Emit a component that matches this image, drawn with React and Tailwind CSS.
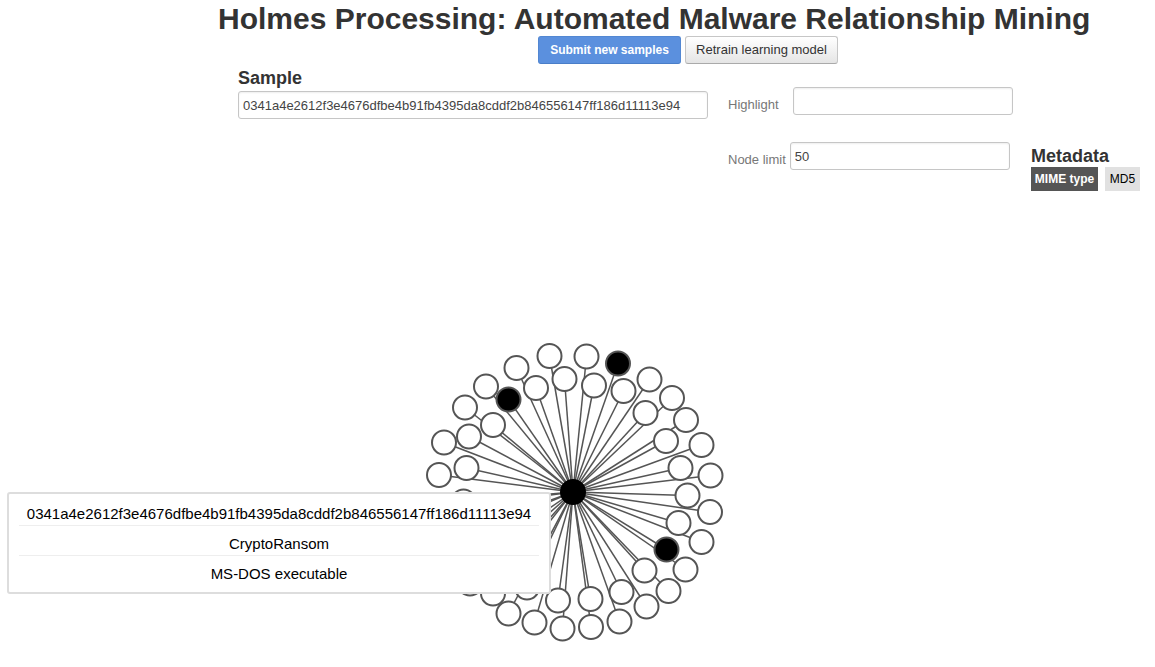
import React, { useState } from "react";

const HASH = "0341a4e2612f3e4676dfbe4b91fb4395da8cddf2b846556147ff186d11113e94";

const CENTER = [573, 492];

// [x, y, highlighted]
const NODES = [
  [549.5, 356], [516.5, 368], [486, 386.5], [508.5, 399.5, true], [536, 388],
  [564.5, 379], [465, 407.5], [493, 425], [444, 442.5], [469, 436.5],
  [439, 475], [466.5, 468], [463.5, 501.5], [586.5, 356.5], [618, 363.5, true],
  [594, 385.5], [623.5, 391], [649.5, 379.5], [672, 398], [645.5, 413],
  [686, 420], [666, 441], [701.5, 445], [680.5, 468], [710.5, 475.5],
  [687.5, 495.5], [710, 512], [678.5, 523], [701.5, 542], [666.5, 549.5, true],
  [685.5, 569.5], [644.5, 570.5], [668.5, 591], [621.5, 592], [646.5, 606.5],
  [619.5, 621.5], [590.5, 599], [591, 627], [558, 600.5], [562.5, 628.5],
  [534.5, 622.5], [508.5, 613.5], [493, 593.5], [527, 587.5], [470, 583.5],
  [440, 510], [446, 545], [466, 531], [480, 556], [501, 573],
];

const INPUT =
  "h-7 shrink-0 rounded-[3px] border border-[#c6c6c6] bg-white px-1 text-[13px] text-[#444] shadow-[inset_0_1px_2px_#eee] outline-none";

function Graph() {
  return (
    <svg
      className="block h-[300px] w-[300px] overflow-visible"
      viewBox="423 342 300 300"
      role="img"
      aria-label="Sample relationships"
    >
      <g stroke="#555" strokeWidth="1.5">
        {NODES.map(([x, y], i) => (
          <line key={i} x1={CENTER[0]} y1={CENTER[1]} x2={x} y2={y} />
        ))}
      </g>
      <g stroke="#555" strokeWidth="2">
        {NODES.map(([x, y, on], i) => (
          <circle key={i} cx={x} cy={y} r="12" fill={on ? "#000" : "#fff"} />
        ))}
      </g>
      <circle cx={CENTER[0]} cy={CENTER[1]} r="13" fill="#000" />
    </svg>
  );
}

export default function App() {
  const [sample, setSample] = useState(HASH);
  const [highlight, setHighlight] = useState("");
  const [limit, setLimit] = useState("50");

  return (
    <div className="overflow-x-hidden bg-white font-['Liberation_Sans',Arial,sans-serif] text-[13px] text-[#333]">
      <header className="pl-[218px]">
        <h1 className="whitespace-nowrap pt-[2px] text-[30px] font-bold leading-[34px]">
          Holmes Processing: Automated Malware Relationship Mining
        </h1>
        <div className="flex gap-1 pl-80">
          <button
            type="button"
            className="h-7 w-[143px] whitespace-nowrap rounded-[3px] border border-[#5287d2] border-b-[#4a7ec8] bg-[#5b90de] text-[12px] font-bold text-white"
          >
            Submit new samples
          </button>
          <button
            type="button"
            className="h-7 w-[153px] whitespace-nowrap rounded-[3px] border border-[#c6c6c6] border-b-[#aaa] bg-linear-to-b from-white to-[#e5e5e5] text-[13px] text-[#333]"
          >
            Retrain learning model
          </button>
        </div>
      </header>

      <div className="flex gap-5 pl-[238px] pt-1">
        <div className="w-[470px] shrink-0">
          <label htmlFor="sample" className="block pb-[2px] text-[18px] font-bold leading-[21px]">
            Sample
          </label>
          <input
            id="sample"
            className={INPUT + " w-full"}
            value={sample}
            onChange={(e) => setSample(e.target.value)}
          />
        </div>

        <div className="flex w-[283px] shrink-0 flex-col gap-[27px] pt-[19px] text-[#777]">
          <div className="flex gap-[14px]">
            <label htmlFor="highlight" className="pt-2 leading-5">Highlight</label>
            <input
              id="highlight"
              className={INPUT + " w-[220px]"}
              value={highlight}
              onChange={(e) => setHighlight(e.target.value)}
            />
          </div>
          <div className="flex gap-1">
            <label htmlFor="limit" className="whitespace-nowrap pt-2 leading-5">Node limit</label>
            <input
              id="limit"
              className={INPUT + " w-[220px]"}
              value={limit}
              onChange={(e) => setLimit(e.target.value)}
            />
          </div>
        </div>

        <section className="shrink-0 pt-[78px]">
          <h2 className="text-[18px] font-bold leading-[21px]">Metadata</h2>
          <div className="flex gap-[7px]">
            <button type="button" className="h-6 w-[67px] whitespace-nowrap bg-[#555] text-[12px] font-bold text-white">
              MIME type
            </button>
            <button type="button" className="h-6 w-[35px] bg-[#e1e1e1] text-[12px] text-black">
              MD5
            </button>
          </div>
        </section>
      </div>

      <main className="flex justify-center pb-6 pr-[9px] pt-[151px]">
        <div className="relative">
          <Graph />
          <div
            role="tooltip"
            className="absolute right-[172px] top-[150px] w-[544px] whitespace-nowrap rounded-[3px] border-2 border-[#ddd] bg-white px-[10px] pb-[6px] pt-[2px] text-center text-[15px] text-black"
          >
            <p className="h-[30px] border-b border-[#eee] pt-1 leading-7">{HASH}</p>
            <p className="h-[30px] border-b border-[#eee] pt-1 leading-7">CryptoRansom</p>
            <p className="h-[30px] pt-1 leading-7">MS-DOS executable</p>
          </div>
        </div>
      </main>
    </div>
  );
}
